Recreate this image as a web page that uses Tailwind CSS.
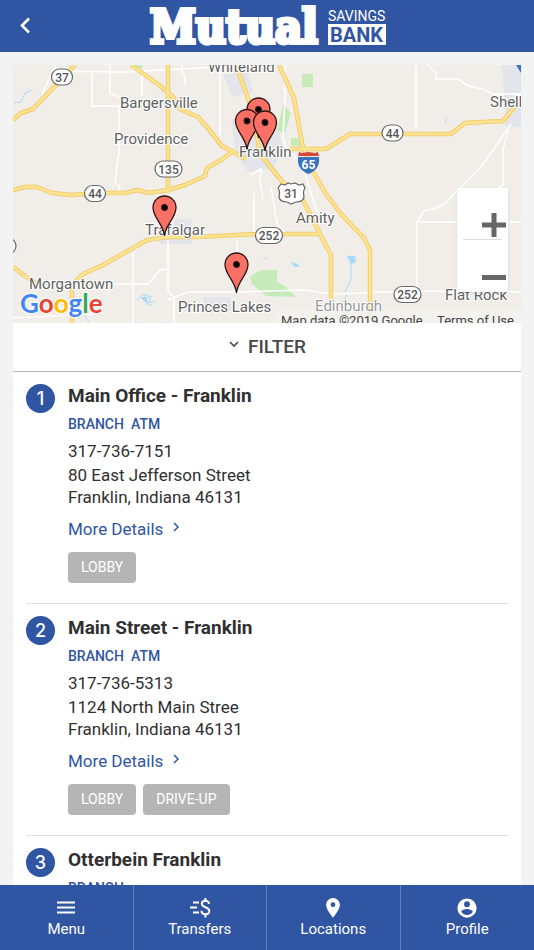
<!DOCTYPE html>
<html lang="en">

<head>
    <meta charset="UTF-8">
    <meta name="viewport" content="width=device-width, initial-scale=1.0">
    <script src="https://cdn.jsdelivr.net/npm/@tailwindcss/browser@4"></script>
    <title>Mutual Savings Bank - Locations</title>
</head>

<body class="bg-[#f3f3f3] font-['Roboto',sans-serif] text-[#303030] h-screen flex flex-col overflow-hidden">
<header class="bg-[#3055a3] h-[52px] shrink-0 relative flex items-center justify-center text-white">
    <button aria-label="Back" class="absolute left-4 top-4 w-5 h-5">
        <svg viewBox="0 0 20 20" class="w-5 h-5" fill="none" stroke="currentColor" stroke-width="2.6"><path d="M13 2.500L6 9.500l7 7"/></svg>
    </button>
    <svg viewBox="0 0 240 52" class="w-[240px] h-[52px]" role="img" aria-label="Mutual Savings Bank">
        <text x="3" y="43" font-family="DejaVu Serif Condensed, DejaVu Serif, serif" font-weight="700" font-size="46" fill="#fff" stroke="#fff" stroke-width="4">Mutual</text>
        <text x="181" y="21" font-family="Roboto, sans-serif" font-size="14" fill="#fff">SAVINGS</text>
        <rect x="181" y="24" width="58" height="21" fill="#fff"/>
        <text x="183" y="42" font-family="Roboto, sans-serif" font-weight="700" font-size="20" fill="#3055a3">BANK</text>
    </svg>
</header>

<main class="grow overflow-y-auto [scrollbar-width:none] px-[13px] pt-[13px]">
    <!-- map -->
    <div class="relative h-[258px] overflow-hidden bg-[#f1eeea]">
        <svg viewBox="13 65 508 258" preserveAspectRatio="xMidYMid slice" class="w-full h-full" font-family="Roboto, sans-serif">
            <defs>
                <g id="pin" stroke="#2b1512" stroke-width="1.300">
                    <path fill="#fb7064" d="M0 0C-1-12-11.500-18-11.500-28.500a11.500 11.500 0 0 1 23 0C11.500-18 1-12 0 0z"/>
                    <circle cy="-28.500" r="2.800" fill="#000"/>
                </g>
                <path id="y1" d="M13 120l8-7 12-4 42-44M131 65l28 20 14 12 7 12 18 8 9 10 15 19 24 13M168 65v128M235 150l-14 10-14 8-2 8-20 9-17 5-20 3-10-3-13 3H97l-25 2-20-2-15-6-12 0-12 3"/>
                <path id="y2" d="M236 65l14 39 5 20 5 30 20 25 10 10 12 9 18 36 11 21v44M290 149h36l24-15h101l14-11 38-2 13-16"/>
                <path id="y3" d="M279 65l15 33 8 45 9 25 15 26 15 20 23 24 6 12v73M72 323v-38l11-11 20-9 44-25 21-3h30l60-3h60M13 267l12 9 12 8"/>
            </defs>
            <g fill="#e4e5ea">
                <path d="M223 75l25-3 5 20-20 5zM231 120l22-12 24 10 5 30-8 20-26 4-12-18zM174 219h18v25h-32v-9h14zM502 65h19v62h-15zM203 297h28v14h-26z"/>
            </g>
            <g fill="#c6ebb9">
                <path d="M133 65h9v3h-9zM302 74h11v13h-11zM283 104l8 9-6 20-8-2zM291 138h9v8h-9zM250 276l12-6 15 0v12l9 5 10 10-30-1-14-12z"/>
            </g>
            <g fill="none" stroke="#a9daf7" stroke-width="1">
                <path d="M14 103l7-1 4-9 8-4M137 300l6-6 8 3-3 6 7-2M144 295l4 10 4 0M84 315l5 7M345 292l6-13v-24M340 307l7-12M446 118v5"/>
            </g>
            <path fill="#a9daf7" d="M347 256l8 0 1 6-5 2zM291 262l7 2 1 3h-5zM140 297h8l-2 6zM260 257l7 1v1z"/>
            <g fill="none" stroke="#fff" stroke-width="1.500">
                <path d="M60 71l66 1 108-6M92 72v34h27v46l-4 30 4 4v10M110 65v28l9 4M182 65v8l3 3v9M220 66v70M142 72v24M56 65L42 94M168 240v52l6 5v26M133 253v70M110 284h38l12-14 8-1M168 300l20-8h50l65-2 30 4 80-3 108 1M237 240v51M254 193v42M285 65v30l-2 45 6 12 12 10 16 50M416 65v65M428 65l8 8v6h22l10 7 15 3 10 5h28M417 290v-68l7-11 12-3 10-5M445 203l36-36 30-43M418 222h103M508 130l-5 20 0 35-5 3M13 318l80-4M271 187l6 36 10 12"/>
                <path d="M251 175l10-6-1 10 3 20"/>
            </g>
            <g fill="none" stroke="#efc967" stroke-width="4.500" stroke-linejoin="round">
                <use href="#y1"/><use href="#y2"/><use href="#y3"/>
            </g>
            <g fill="none" stroke="#fde28f" stroke-width="2.800" stroke-linejoin="round">
                <use href="#y1"/><use href="#y2"/><use href="#y3"/>
            </g>

            <!-- route shields -->
            <g fill="#fff" stroke="#666" stroke-width="1.200">
                <rect x="51.500" y="69" width="21" height="16" rx="8"/>
                <rect x="155" y="161" width="27" height="16" rx="8"/>
                <rect x="84.500" y="185.500" width="21" height="16" rx="8"/>
                <rect x="382" y="125" width="21" height="16" rx="8"/>
                <rect x="255.500" y="227.500" width="27" height="16" rx="8"/>
                <rect x="394" y="286.500" width="27" height="16" rx="8"/>
                <rect x="-3" y="238" width="19" height="16" rx="8"/>
                <path d="M281 184l4 1 3-2 3 1 4-1 4 2 4-1 2 4c-2 3-2 5-1 8 0 5-4 6-8 6l-5 2-4-2c-5 0-8-2-8-6 1-3 1-5-1-8z"/>
            </g>
            <path fill="#3972c0" d="M298 157h21c1 9-3 14-10.500 17C301 171 297 166 298 157z"/>
            <path fill="#d4483b" d="M299 152l3 1 6.500-1 6.500 1 3-1 1 4h-21z"/>
            <path fill="#3972c0" d="M516 65h5v8z"/>
            <g font-size="12" fill="#555" text-anchor="middle" font-weight="500">
                <text x="62" y="81.500">37</text>
                <text x="168.500" y="173.500">135</text>
                <text x="95" y="198">44</text>
                <text x="392.500" y="137.500">44</text>
                <text x="269" y="240">252</text>
                <text x="407.500" y="299">252</text>
                <text x="291" y="198">31</text>
                <text x="308.500" y="169" fill="#fff" font-weight="700">65</text>
            </g>

            <!-- towns -->
            <g font-size="15" fill="#616161" stroke="#fff" stroke-width="2" paint-order="stroke" stroke-linejoin="round">
                <text x="208" y="72">Whiteland</text>
                <text x="120" y="108">Bargersville</text>
                <text x="114" y="144">Providence</text>
                <text x="490" y="107">Shelbyville</text>
                <text x="239" y="157">Franklin</text>
                <text x="296" y="223">Amity</text>
                <text x="145" y="235">Trafalgar</text>
                <text x="29" y="289">Morgantown</text>
                <text x="178" y="312">Princes Lakes</text>
                <text x="315" y="311" fill="#999">Edinburgh</text>
                <text x="445" y="300">Flat Rock</text>
            </g>
            <path fill="#f5f3f0" fill-opacity=".8" d="M276 311h245v12H276z"/>
            <g font-size="13" fill="#444">
                <text x="281" y="325">Map data ©2019 Google</text>
                <text x="437" y="325">Terms of Use</text>
            </g>
            <text x="20" y="313" font-family="Lato, sans-serif" font-weight="700" font-size="26" stroke="#fff" stroke-width="2" paint-order="stroke"><tspan fill="#4285f4">G</tspan><tspan fill="#ea4335">o</tspan><tspan fill="#fbbc05">o</tspan><tspan fill="#4285f4">g</tspan><tspan fill="#34a853">l</tspan><tspan fill="#ea4335">e</tspan></text>

            <use href="#pin" x="258.500" y="138"/>
            <use href="#pin" x="247" y="149.500"/>
            <use href="#pin" x="265" y="151"/>
            <use href="#pin" x="164.500" y="236"/>
            <use href="#pin" x="236.500" y="293"/>
        </svg>
        <div class="absolute right-[13px] top-[123px] w-[51px] h-[104px] bg-white shadow-sm flex flex-col pl-1.5 text-[#666]">
            <button aria-label="Zoom in" class="h-[52px] w-[39px] border-b border-[#ddd] relative">
                <svg viewBox="0 0 24 24" class="absolute left-[19px] top-[25px] w-6 h-6" fill="currentColor"><path d="M9.500 0h5v9.500H24v5h-9.500V24h-5v-9.500H0v-5h9.500z"/></svg>
            </button>
            <button aria-label="Zoom out" class="h-[52px] w-[39px] relative">
                <svg viewBox="0 0 24 24" class="absolute left-[19px] top-[25px] w-6 h-6" fill="currentColor"><path d="M0 10h24v5H0z"/></svg>
            </button>
        </div>
    </div>

    <div class="bg-white">
        <button class="w-full h-[49px] border-b border-[#b5b5b5] flex items-center justify-center gap-2 text-[19px] font-medium text-[#484848]">
            <svg viewBox="0 0 12 12" class="w-3 h-3 mb-1" fill="none" stroke="currentColor" stroke-width="1.600"><path d="M2 3l4 4 4-4"/></svg>
            FILTER
        </button>

        <!-- branches -->
        <ul class="px-[13px]">
            <li class="flex gap-[13px] pt-3 pb-5 border-b border-[#e0e0e0]">
                <span class="w-[29px] h-[29px] shrink-0 rounded-full bg-[#3055a3] text-white text-lg leading-none font-['Inter',sans-serif] font-medium flex items-center justify-center">1</span>
                <div>
                    <h2 class="text-[19px] leading-6 font-bold">Main Office - Franklin</h2>
                    <p class="mt-1 text-sm leading-6 font-medium text-[#3055a3] flex gap-[7px]"><span>BRANCH</span><span>ATM</span></p>
                    <p class="mt-1 text-[17px] leading-[22px]">317-736-7151</p>
                    <p class="mt-[2px] text-[17px] leading-[22px]">80 East Jefferson Street<br>Franklin, Indiana 46131</p>
                    <a href="#" class="mt-[10px] text-[17px] leading-[22px] text-[#3055a3] flex items-center gap-2">More Details
                        <svg viewBox="0 0 10 10" class="w-2.5 h-2.5 mb-1" fill="none" stroke="currentColor" stroke-width="1.500"><path d="M3 1l4 4-4 4"/></svg>
                    </a>
                    <div class="mt-3 flex gap-[7px]">
                        <span class="h-[31px] px-[13px] rounded bg-[#b5b5b5] text-white text-sm leading-[31px]">LOBBY</span>
                    </div>
                </div>
            </li>
            <li class="flex gap-[13px] pt-3 pb-5 border-b border-[#e0e0e0]">
                <span class="w-[29px] h-[29px] shrink-0 rounded-full bg-[#3055a3] text-white text-lg leading-none font-['Inter',sans-serif] font-medium flex items-center justify-center">2</span>
                <div>
                    <h2 class="text-[19px] leading-6 font-bold">Main Street - Franklin</h2>
                    <p class="mt-1 text-sm leading-6 font-medium text-[#3055a3] flex gap-[7px]"><span>BRANCH</span><span>ATM</span></p>
                    <p class="mt-1 text-[17px] leading-[22px]">317-736-5313</p>
                    <p class="mt-[2px] text-[17px] leading-[22px]">1124 North Main Stree<br>Franklin, Indiana 46131</p>
                    <a href="#" class="mt-[10px] text-[17px] leading-[22px] text-[#3055a3] flex items-center gap-2">More Details
                        <svg viewBox="0 0 10 10" class="w-2.5 h-2.5 mb-1" fill="none" stroke="currentColor" stroke-width="1.500"><path d="M3 1l4 4-4 4"/></svg>
                    </a>
                    <div class="mt-3 flex gap-[7px]">
                        <span class="h-[31px] px-[13px] rounded bg-[#b5b5b5] text-white text-sm leading-[31px]">LOBBY</span>
                        <span class="h-[31px] px-[13px] rounded bg-[#b5b5b5] text-white text-sm leading-[31px]">DRIVE-UP</span>
                    </div>
                </div>
            </li>
            <li class="flex gap-[13px] pt-3 pb-5">
                <span class="w-[29px] h-[29px] shrink-0 rounded-full bg-[#3055a3] text-white text-lg leading-none font-['Inter',sans-serif] font-medium flex items-center justify-center">3</span>
                <div>
                    <h2 class="text-[19px] leading-6 font-bold">Otterbein Franklin</h2>
                    <p class="mt-1 text-sm leading-6 font-medium text-[#3055a3]">BRANCH</p>
                </div>
            </li>
        </ul>
    </div>
</main>

<nav class="h-[65px] shrink-0 bg-[#3055a3] text-white grid grid-cols-4 divide-x divide-[#6480ba] text-[15px] leading-5">
    <a href="#" class="flex flex-col items-center pt-3">
        <svg viewBox="0 0 22 22" class="w-[22px] h-[22px]" stroke="currentColor" stroke-width="2"><path d="M2 5.500h18M2 10.500h18M2 15.500h18"/></svg>
        Menu
    </a>
    <a href="#" class="flex flex-col items-center pt-3">
        <svg viewBox="0 0 22 22" class="w-[22px] h-[22px]" fill="none" stroke="currentColor" stroke-width="2"><path d="M4 5.500h6M1 10.500h7M4 15.500h6"/><path d="M20 7c0-2-1.500-3.200-3.700-3.200-2 0-3.500 1.200-3.500 3 0 4.400 7.500 2.600 7.500 7.200 0 2-1.700 3.200-3.900 3.200s-3.900-1.200-3.900-3.400M16.400 1v3M16.400 17v3.500"/></svg>
        Transfers
    </a>
    <a href="#" class="flex flex-col items-center pt-3">
        <svg viewBox="0 0 24 24" class="w-[22px] h-[22px]" fill="currentColor"><path d="M12 1C8 1 4.500 4.200 4.500 8.500c0 5.500 7.500 14 7.500 14s7.500-8.500 7.500-14C19.500 4.200 16 1 12 1zm0 10a2.600 2.600 0 1 1 0-5.200 2.600 2.600 0 0 1 0 5.200z"/></svg>
        Locations
    </a>
    <a href="#" class="flex flex-col items-center pt-3">
        <svg viewBox="0 0 24 24" class="w-[22px] h-[22px]" fill="currentColor"><path d="M12 1.500a10.500 10.500 0 1 0 0 21 10.500 10.500 0 0 0 0-21zm0 3.200a3.200 3.200 0 1 1 0 6.400 3.200 3.200 0 0 1 0-6.400zm0 15c-2.700 0-5-1.400-6.300-3.500 0-2.100 4.200-3.200 6.300-3.200s6.300 1.100 6.300 3.200A7.500 7.500 0 0 1 12 19.700z"/></svg>
        Profile
    </a>
</nav>
</body>

</html>
